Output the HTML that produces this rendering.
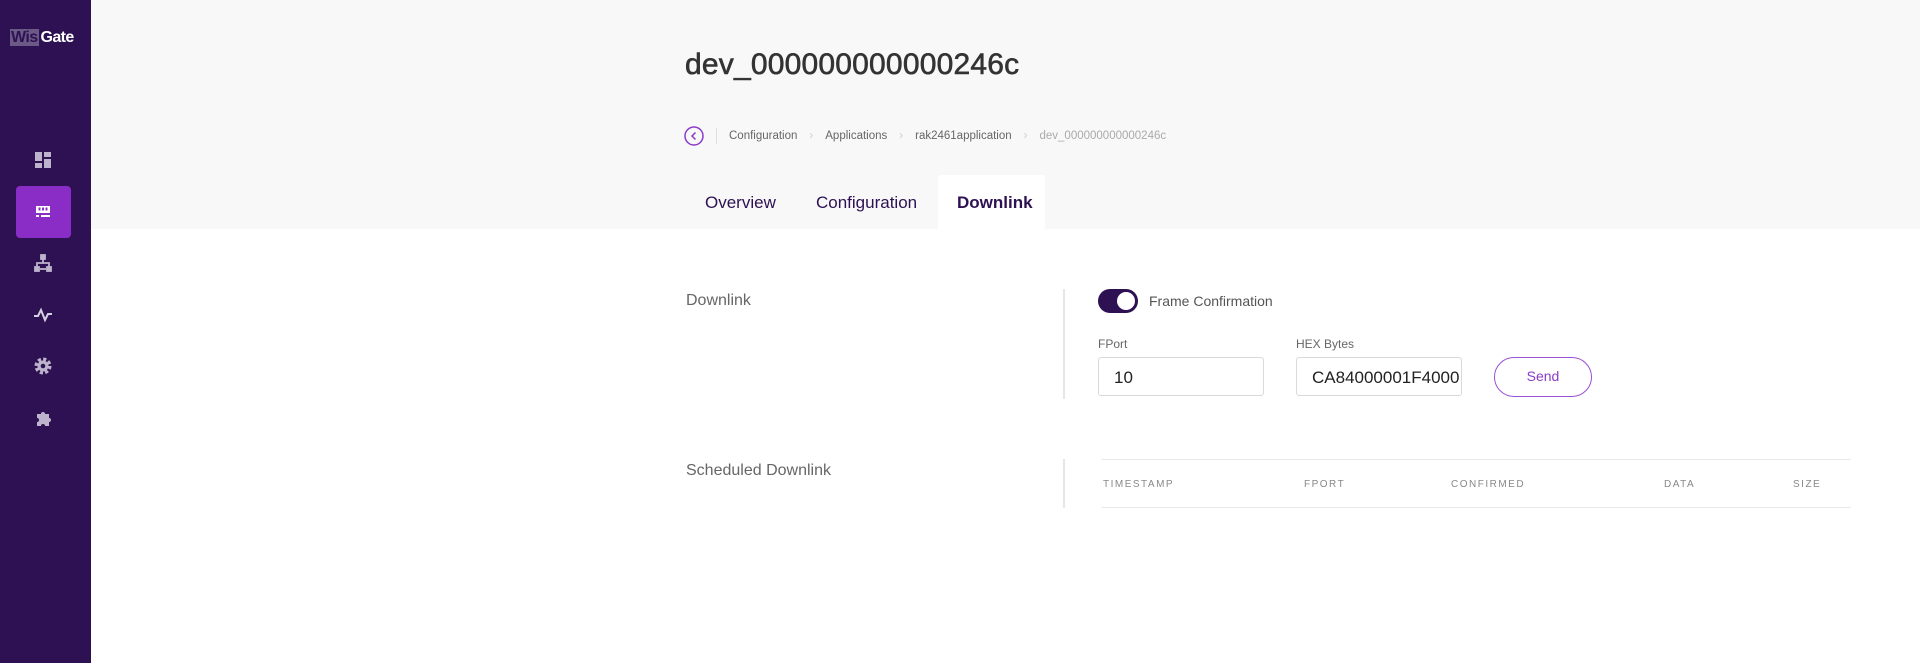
<!DOCTYPE html>
<html><head><meta charset="utf-8"><style>
*{margin:0;padding:0;box-sizing:border-box}
body{width:1920px;height:663px;background:#fff;font-family:"Liberation Sans",sans-serif;position:relative;overflow:hidden}
.sb{position:absolute;left:0;top:0;width:91px;height:663px;background:#2d1152}
.hdr{position:absolute;left:91px;top:0;width:1829px;height:229px;background:#f8f8f8}
.a{position:absolute;white-space:nowrap}
.ico{position:absolute;left:33px;width:20px;height:20px}
</style></head><body>
<div class="sb">
 <div class="a" style="left:10px;top:29px;font-size:16px;font-weight:bold;letter-spacing:-0.6px;line-height:18px">
  <span style="background:#6b5a86;color:#2d1152;padding:0 1px">Wis</span><span style="color:#fff;margin-left:2px">Gate</span></div>
 <svg class="ico" style="top:150px" viewBox="0 0 20 20"><rect x="2" y="2" width="7" height="9" fill="#bdb3cc"/><rect x="11" y="2" width="7" height="5" fill="#bdb3cc"/><rect x="2" y="13" width="7" height="5" fill="#bdb3cc"/><rect x="11" y="9" width="7" height="9" fill="#bdb3cc"/></svg>
 <div class="a" style="left:16px;top:186px;width:55px;height:52px;background:#8a2dc7;border-radius:4px"></div>
 <svg class="ico" style="top:202px" viewBox="0 0 20 20"><rect x="3" y="4" width="14" height="7" fill="#fff"/><rect x="5.5" y="5.5" width="2" height="3" fill="#8a2dc7"/><rect x="9" y="5.5" width="2" height="3" fill="#8a2dc7"/><rect x="12.5" y="5.5" width="2" height="3" fill="#8a2dc7"/><rect x="3" y="13" width="3" height="2" fill="#fff"/><rect x="8" y="13" width="9" height="2" fill="#fff"/></svg>
 <svg class="ico" style="top:253px" viewBox="0 0 20 20" fill="none" stroke="#bdb3cc" stroke-width="1.8"><rect x="8" y="2" width="4" height="4" fill="#bdb3cc"/><path d="M10 6v4M4 14v-4h12v4"/><rect x="2" y="14" width="4" height="4" fill="#bdb3cc"/><rect x="14" y="14" width="4" height="4" fill="#bdb3cc"/><path d="M7 16h6"/></svg>
 <svg class="ico" style="top:305px" viewBox="0 0 20 20" fill="none" stroke="#d6cfe0" stroke-width="2"><path d="M1 11h4l3-6 4 10 3-6h4"/></svg>
 <svg class="ico" style="top:356px" viewBox="0 0 20 20"><circle cx="10" cy="10" r="6.5" fill="none" stroke="#bdb3cc" stroke-width="4" stroke-dasharray="3 2.1"/><circle cx="10" cy="10" r="5.5" fill="#bdb3cc"/><circle cx="10" cy="10" r="2.3" fill="#2d1152"/></svg>
 <svg class="ico" style="top:408px" viewBox="0 0 20 20"><path d="M4 6h4a2 2 0 1 1 4 0h4v4a2 2 0 1 1 0 4v4h-4a2 2 0 1 0-4 0H4v-4a2 2 0 1 0 0-4z" fill="#bdb3cc"/></svg>
</div>
<div class="hdr"></div>
<div class="a" style="left:685px;top:48px;font-size:30px;color:#333;-webkit-text-stroke:0.6px #333;letter-spacing:0.2px">dev_000000000000246c</div>
<svg class="a" style="left:684px;top:126px" width="20" height="20" viewBox="0 0 20 20"><circle cx="10" cy="10" r="9" fill="none" stroke="#8a3cc8" stroke-width="1.5"/><path d="M11.5 6.5 8 10l3.5 3.5" fill="none" stroke="#8a3cc8" stroke-width="1.5"/></svg>
<div class="a" style="left:716px;top:128px;width:1px;height:16px;background:#e0e0e0"></div>
<div class="a" style="left:729px;top:130px;font-size:11.5px;color:#666">Configuration<span style="color:#ccc;margin:0 12px">›</span>Applications<span style="color:#ccc;margin:0 12px">›</span>rak2461application<span style="color:#ccc;margin:0 12px">›</span><span style="color:#aaa">dev_000000000000246c</span></div>
<div class="a" style="left:938px;top:175px;width:107px;height:54px;background:#fff;border-radius:3px 3px 0 0"></div>
<div class="a" style="left:705px;top:193px;font-size:17px;color:#2d1152">Overview</div>
<div class="a" style="left:816px;top:193px;font-size:17px;color:#2d1152">Configuration</div>
<div class="a" style="left:957px;top:193px;font-size:17px;color:#2d1152;font-weight:bold">Downlink</div>
<div class="a" style="left:686px;top:292px;font-size:16px;color:#666">Downlink</div>
<div class="a" style="left:1063px;top:289px;width:2px;height:110px;background:#e6e6e6"></div>
<div class="a" style="left:1098px;top:289px;width:40px;height:24px;border-radius:12px;background:#2d1152"></div>
<div class="a" style="left:1117px;top:292px;width:18px;height:18px;border-radius:50%;background:#fff"></div>
<div class="a" style="left:1149px;top:293px;font-size:14px;color:#555">Frame Confirmation</div>
<div class="a" style="left:1098px;top:337px;font-size:12px;color:#666">FPort</div>
<div class="a" style="left:1296px;top:337px;font-size:12px;color:#666">HEX Bytes</div>
<div class="a" style="left:1098px;top:357px;width:166px;height:39px;border:1px solid #d9d9d9;border-radius:3px;font-size:17px;color:#222;padding:10px 0 0 15px">10</div>
<div class="a" style="left:1296px;top:357px;width:166px;height:39px;border:1px solid #d9d9d9;border-radius:3px;font-size:17px;color:#222;padding:10px 0 0 15px;overflow:hidden">CA84000001F4000</div>
<div class="a" style="left:1494px;top:357px;width:98px;height:40px;border:1.5px solid #9a52d4;border-radius:20px;font-size:14px;color:#8a3cc8;text-align:center;line-height:37px">Send</div>
<div class="a" style="left:686px;top:462px;font-size:16px;color:#666">Scheduled Downlink</div>
<div class="a" style="left:1063px;top:459px;width:2px;height:49px;background:#e6e6e6"></div>
<div class="a" style="left:1102px;top:459px;width:749px;height:1px;background:#e8e8e8"></div>
<div class="a" style="left:1102px;top:507px;width:749px;height:1px;background:#e8e8e8"></div>
<div class="a" style="top:479px;left:1103px;font-size:10px;color:#888;letter-spacing:1.5px">TIMESTAMP</div>
<div class="a" style="top:479px;left:1304px;font-size:10px;color:#888;letter-spacing:1.5px">FPORT</div>
<div class="a" style="top:479px;left:1451px;font-size:10px;color:#888;letter-spacing:1.5px">CONFIRMED</div>
<div class="a" style="top:479px;left:1664px;font-size:10px;color:#888;letter-spacing:1.5px">DATA</div>
<div class="a" style="top:479px;left:1793px;font-size:10px;color:#888;letter-spacing:1.5px">SIZE</div>
</body></html>
